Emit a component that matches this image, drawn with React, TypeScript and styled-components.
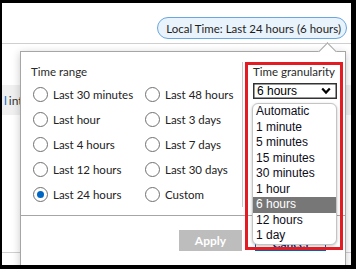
import styled, { createGlobalStyle } from 'styled-components';

const GlobalStyle = createGlobalStyle`
  html, body {
    margin: 0;
    padding: 0;
    background: #ffffff;
  }
  body {
    font-family: Lato, "Segoe UI", "Noto Sans", sans-serif;
    font-size: 11.5px;
    color: #222;
  }
  * { box-sizing: border-box; }
`;

const RANGES_LEFT = ['Last 30 minutes', 'Last hour', 'Last 4 hours', 'Last 12 hours', 'Last 24 hours'];
const RANGES_RIGHT = ['Last 48 hours', 'Last 3 days', 'Last 7 days', 'Last 30 days', 'Custom'];
const GRAINS = ['Automatic', '1 minute', '5 minutes', '15 minutes', '30 minutes', '1 hour', '6 hours', '12 hours', '1 day'];

const App = () => {
  const selectedRange = 'Last 24 hours';
  const selectedGrain = '6 hours';

  // pair up the two columns row by row
  const ranges = RANGES_LEFT.flatMap((r, i) => [r, RANGES_RIGHT[i]]);

  return (
    <>
      <GlobalStyle />
      <Frame>
        <Header>
          <TimePill>Local Time: Last 24 hours (6 hours)</TimePill>
        </Header>

        <PageBody>
          <FilterBar>
            <LinkPart>l</LinkPart>int
          </FilterBar>
          <PageDivider />
        </PageBody>

        <Popup>
          <Caret />
          <PopupBody>
            <RangePane>
              <SectionLabel>Time range</SectionLabel>
              <RadioGrid>
                {ranges.map((r) => (
                  <RadioRow key={r}>
                    <RadioCircle $checked={r === selectedRange} />
                    {r}
                  </RadioRow>
                ))}
              </RadioGrid>
            </RangePane>

            <GrainPane>
              <SectionLabel>Time granularity</SectionLabel>
              <SelectWrap>
                <SelectBox>
                  {selectedGrain}
                  <svg width="10" height="8" viewBox="0 0 10 8">
                    <path d="M1.2 1.6 L5 5.6 L8.8 1.6" fill="none" stroke="#000" strokeWidth="2.2" />
                  </svg>
                </SelectBox>
                <ListBox>
                  {GRAINS.map((g) => (
                    <ListItem key={g} $active={g === selectedGrain}>{g}</ListItem>
                  ))}
                </ListBox>
              </SelectWrap>
            </GrainPane>
          </PopupBody>

          <Footer>
            <ApplyButton>Apply</ApplyButton>
            <CancelButton>Cancel</CancelButton>
          </Footer>
        </Popup>

        <Highlight />
      </Frame>
    </>
  );
};

const Frame = styled.div`
  position: relative;
  width: 356px;
  height: 269px;
  border-style: solid;
  border-color: #000;
  border-width: 3px 5px 4px 2px;
  background: #fff;
  overflow: hidden;
`;

const Header = styled.div`
  height: 41px;
  display: flex;
  justify-content: flex-end;
  align-items: flex-end;
  padding: 0 4px 4px 0;
  border-bottom: 1px solid #cfcfcf;
`;

const TimePill = styled.div`
  height: 22px;
  padding: 0 5px 0 8px;
  display: flex;
  align-items: center;
  border: 1px solid #6aa7e0;
  border-radius: 11px;
  background: #e9f3fc;
  color: #1e1e1e;
  font-size: 11.5px;
  white-space: nowrap;
`;

const PageBody = styled.div`
  display: flex;
  flex-direction: column;
  padding-top: 41px;
`;

const FilterBar = styled.div`
  width: 100%;
  height: 30px;
  display: flex;
  align-items: center;
  padding-left: 2px;
  background: #f0f0f0;
  color: #333;
  font-size: 12px;
`;

const LinkPart = styled.span`
  color: #0a6cc2;
  margin-right: 2px;
`;

const PageDivider = styled.div`
  margin-top: 137px;
  height: 1px;
  background: #d0d0d0;
`;

const Popup = styled.div`
  position: absolute;
  left: 18px;
  top: 48px;
  width: 326px;
  height: 222px;
  background: #fff;
  border: 1px solid #a6a6a6;
  box-shadow: 0 2px 8px rgba(0, 0, 0, 0.22);
  display: flex;
  flex-direction: column;
`;

const Caret = styled.div`
  position: absolute;
  left: 300px;
  top: -7px;
  width: 13px;
  height: 13px;
  background: #fff;
  border-top: 1px solid #a6a6a6;
  border-left: 1px solid #a6a6a6;
  transform: rotate(45deg);
`;

const PopupBody = styled.div`
  display: flex;
  height: 163px;
`;

const RangePane = styled.div`
  width: 221px;
  padding: 12px 0 0 10px;
`;

const SectionLabel = styled.div`
  font-size: 11.5px;
  line-height: 16px;
  color: #2a2a2a;
  white-space: nowrap;
`;

const RadioGrid = styled.div`
  margin-top: 2px;
  display: grid;
  grid-template-columns: 112px 1fr;
  grid-auto-rows: 25px;
  padding-left: 2px;
`;

const RadioRow = styled.div`
  display: flex;
  align-items: center;
  gap: 5px;
  font-size: 11.5px;
  color: #222;
  white-space: nowrap;
`;

const RadioCircle = styled.span<{ $checked: boolean }>`
  width: 15px;
  height: 15px;
  border-radius: 50%;
  border: 1px solid #707070;
  display: inline-flex;
  align-items: center;
  justify-content: center;
  flex-shrink: 0;
  &::after {
    content: '';
    width: 7px;
    height: 7px;
    border-radius: 50%;
    background: ${(p) => (p.$checked ? '#0066c4' : 'transparent')};
  }
`;

const GrainPane = styled.div`
  flex: 1;
  margin: 10px 0 8px;
  padding: 2px 0 0 10px;
  border-left: 1px solid #c8c8c8;
`;

const SelectWrap = styled.div`
  position: relative;
  margin-top: 3px;
  width: 84px;
`;

const SelectBox = styled.div`
  height: 16px;
  display: flex;
  align-items: center;
  justify-content: space-between;
  padding: 0 5px 0 3px;
  border: 1px solid #333;
  box-shadow: inset 0 0 0 0.5px #333;
  font-family: "Liberation Sans", Arial, sans-serif;
  font-size: 12px;
  color: #000;
`;

const ListBox = styled.div`
  position: absolute;
  top: 20px;
  left: -1px;
  width: 85px;
  padding: 0;
  background: #fff;
  border: 1px solid #c4c4c4;
  border-radius: 6px;
  box-shadow: 0 1px 3px rgba(0, 0, 0, 0.25);
  overflow: hidden;
  z-index: 2;
`;

const ListItem = styled.div<{ $active: boolean }>`
  height: 15.5px;
  line-height: 15.5px;
  padding-left: 3px;
  font-family: "Liberation Sans", Arial, sans-serif;
  font-size: 12px;
  white-space: nowrap;
  color: ${(p) => (p.$active ? '#fff' : '#0d0d1a')};
  background: ${(p) => (p.$active ? '#777777' : 'transparent')};
`;

const Footer = styled.div`
  flex: 1;
  border-top: 1px solid #a6a6a6;
  display: flex;
  justify-content: flex-end;
  align-items: flex-start;
  gap: 13px;
  padding: 14px 19px 0 0;
`;

const ApplyButton = styled.button`
  width: 63px;
  height: 21px;
  border: none;
  background: #bdbdbd;
  color: #fff;
  font-family: Lato, "Segoe UI", sans-serif;
  font-size: 12px;
  font-weight: 700;
  padding: 0;
`;

const CancelButton = styled.button`
  width: 71px;
  height: 21px;
  border: 1px solid #0063b1;
  background: #fff;
  color: #0a3a8a;
  font-family: Lato, "Segoe UI", sans-serif;
  font-size: 12px;
  font-weight: 700;
  padding: 5px 0 0;
`;

const Highlight = styled.div`
  position: absolute;
  left: 243px;
  top: 59px;
  width: 98px;
  height: 188px;
  border: 3px solid #e31b23;
  pointer-events: none;
  z-index: 3;
`;

export default App;
